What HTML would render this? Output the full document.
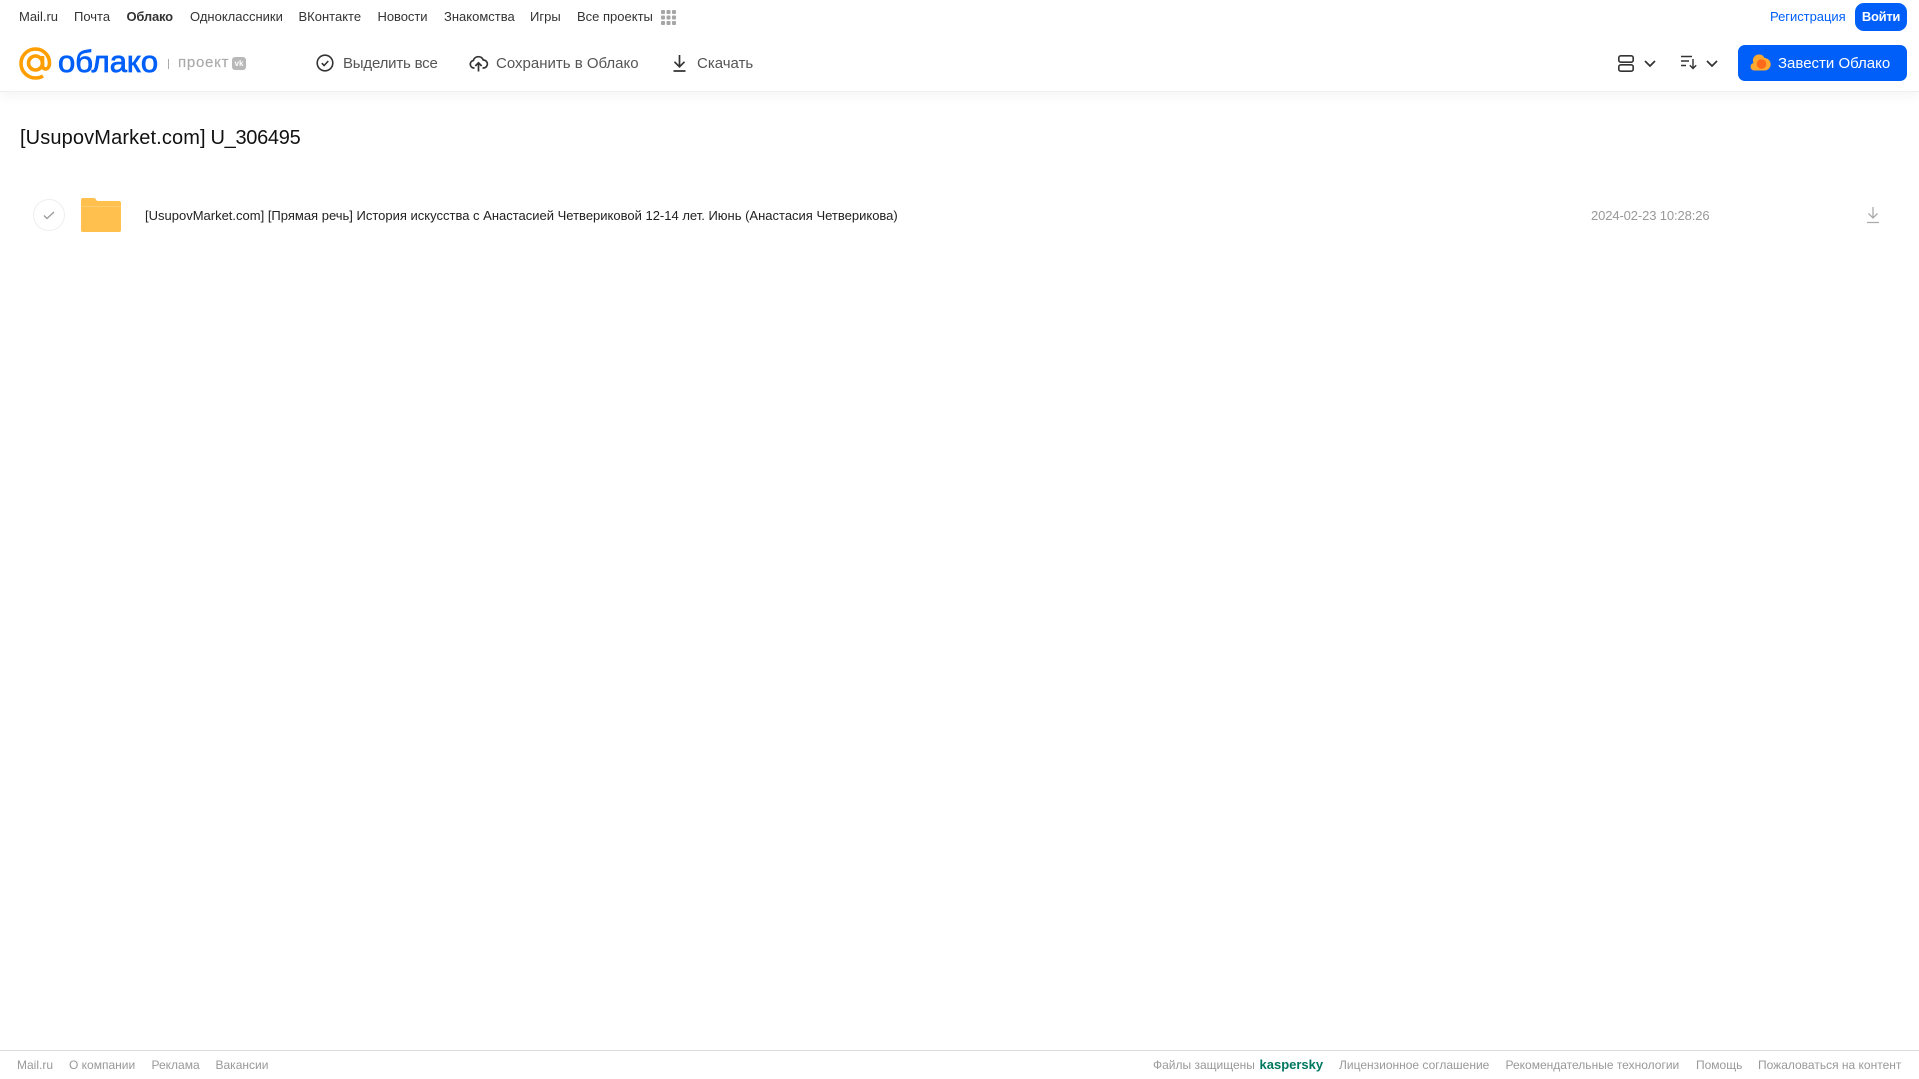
<!DOCTYPE html>
<html lang="ru"><head><meta charset="utf-8"><title>Облако</title>
<style>
html,body{margin:0;padding:0;width:1919px;height:1079px;overflow:hidden;background:#fff;font-family:"Liberation Sans",Arial,sans-serif}
.t{position:absolute;white-space:nowrap;line-height:18px}
.n{top:8px;font-size:13px;color:#333;transform-origin:0 50%}
.b{top:55px;font-size:15px;color:#555}
.f{top:1056px;font-size:12px;color:#999}
svg{position:absolute;overflow:visible}
</style></head><body>
<div style="position:absolute;left:0;top:0;width:1919px;height:91px;background:#fff;box-shadow:0 1px 0 #f0f0f0,0 4px 12px rgba(0,0,0,.05)"></div>

<span class="t n" style="left:19px">Mail.ru</span>
<span class="t n" style="left:74px">Почта</span>
<span class="t n" style="left:126.500px;font-weight:bold;letter-spacing:-.2px">Облако</span>
<span class="t n" style="left:190px">Одноклассники</span>
<span class="t n" style="left:298.500px">ВКонтакте</span>
<span class="t n" style="left:377.500px;letter-spacing:-.05px">Новости</span>
<span class="t n" style="left:444px">Знакомства</span>
<span class="t n" style="left:530px">Игры</span>
<span class="t n" style="left:577px">Все проекты</span>
<svg style="left:661px;top:10px" width="15" height="15" fill="#a6a6a6"><rect width="4" height="4" x="0" y="0" rx="1"/><rect width="4" height="4" x="5.500" y="0" rx="1"/><rect width="4" height="4" x="11" y="0" rx="1"/><rect width="4" height="4" x="0" y="5.500" rx="1"/><rect width="4" height="4" x="5.500" y="5.500" rx="1"/><rect width="4" height="4" x="11" y="5.500" rx="1"/><rect width="4" height="4" x="0" y="11" rx="1"/><rect width="4" height="4" x="5.500" y="11" rx="1"/><rect width="4" height="4" x="11" y="11" rx="1"/></svg>

<span class="t" style="left:1770px;top:8px;font-size:13px;color:#005ff9;letter-spacing:-.03px">Регистрация</span>
<div style="position:absolute;left:1855px;top:3px;width:52px;height:28px;border-radius:9px;background:#005ff9;color:#fff;font-size:13px;font-weight:bold;line-height:28px;text-align:center;letter-spacing:-.3px">Войти</div>

<!-- logo -->
<svg style="left:19px;top:47px" width="33" height="33" viewBox="0 0 33 33" fill="none" stroke="#ff9e00" stroke-width="3.600"><circle cx="16.500" cy="16" r="7"/><path d="M23.500 9v9.500c0 5 7 5 7-2.500C30.500 8 24 2 16.500 2 8.500 2 2 8.500 2 16.500S8.500 31 16.500 31c3 0 5.500-.8 7.500-2"/></svg>
<span class="t" style="left:58px;top:44px;font-size:31px;line-height:36px;color:#005ff9;-webkit-text-stroke:.8px #005ff9">облако</span>
<div style="position:absolute;left:168px;top:59px;width:1px;height:10px;background:#aaa"></div>
<span class="t" style="left:178px;top:54px;font-size:15px;color:#aaa;letter-spacing:.75px;-webkit-text-stroke:.15px #aaa">проект</span>
<div style="position:absolute;left:232px;top:57px;width:14px;height:13px;border-radius:3px;background:#b8b8b8;color:#fff;font-size:8px;font-weight:bold;line-height:13px;text-align:center">vk</div>

<!-- toolbar -->
<svg style="left:316px;top:54px" width="18" height="18" viewBox="0 0 18 18" fill="none" stroke="#333" stroke-width="1.600"><circle cx="9" cy="9" r="7.800"/><path d="M5.800 9.200l2.300 2.300 4.200-4.500"/></svg>
<span class="t b" style="left:343px;letter-spacing:-.2px">Выделить все</span>
<svg style="left:469px;top:54px" width="19" height="18" viewBox="0 0 19 18" fill="none" stroke="#333" stroke-width="1.700"><path d="M5.500 14H4.800A3.800 3.800 0 0 1 4.300 6.500 5.300 5.300 0 0 1 14.300 6 4 4 0 0 1 14.500 14H13.500"/><path d="M9.500 17.500V9M6.300 12l3.200-3.200L12.700 12"/></svg>
<span class="t b" style="left:496px">Сохранить в Облако</span>
<svg style="left:672px;top:54px" width="15" height="18" viewBox="0 0 15 18" fill="none" stroke="#333" stroke-width="1.700"><path d="M7.500 1v11.500M2.500 7.800l5 5 5-5M1.500 17h12"/></svg>
<span class="t b" style="left:697px">Скачать</span>

<svg style="left:1618px;top:55px" width="16" height="17" viewBox="0 0 16 17" fill="none" stroke="#333" stroke-width="1.600"><rect x=".8" y=".8" width="14.400" height="6.400" rx="2"/><rect x=".8" y="9.800" width="14.400" height="6.400" rx="2"/></svg>
<svg style="left:1644px;top:60px" width="12" height="7" fill="none" stroke="#333" stroke-width="1.700"><path d="M1 1l5 5 5-5"/></svg>
<svg style="left:1681px;top:55px" width="16" height="15" fill="none" stroke="#333" stroke-width="1.400"><path d="M0 1.500h11M0 6h8M0 10.500h5M12 4v9.500M8.800 10.300l3.200 3.200 3.200-3.200"/></svg>
<svg style="left:1706px;top:60px" width="12" height="7" fill="none" stroke="#333" stroke-width="1.700"><path d="M1 1l5 5 5-5"/></svg>

<div style="position:absolute;left:1738px;top:45px;width:169px;height:36px;border-radius:7px;background:#005ff9"></div>
<svg style="left:1750px;top:54px" width="20" height="17" viewBox="0 0 20 17"><path d="M4 16.500A3.800 3.800 0 0 1 3.500 9 6 6 0 0 1 9.500.5c2.500 0 4 1.500 5 3.500a6.300 6.300 0 0 1 1 12.500z" fill="#ffa930"/><circle cx="11.500" cy="10" r="4.800" fill="#ff6a1a"/></svg>
<span class="t" style="left:1778px;top:55px;font-size:15px;color:#fff">Завести Облако</span>

<!-- title -->
<span class="t" style="left:20px;top:125px;font-size:20px;line-height:26px;color:#111;letter-spacing:.13px">[UsupovMarket.com]</span>
<span class="t" style="left:210.500px;top:125px;font-size:20px;line-height:26px;color:#111;letter-spacing:-.3px">U_306495</span>

<!-- row -->
<div style="position:absolute;left:33px;top:199px;width:30px;height:30px;border:1px solid #eee;border-radius:50%"></div>
<svg style="left:43px;top:211px" width="12" height="9" fill="none" stroke="#999" stroke-width="1.300"><path d="M1 4.500l3 3 7-6.500"/></svg>
<svg style="left:81px;top:198px" width="40" height="34" viewBox="0 0 40 34"><path d="M2 0h10c2 0 3 1 4 3h22a2 2 0 0 1 2 2v27a2 2 0 0 1-2 2H2a2 2 0 0 1-2-2V2a2 2 0 0 1 2-2z" fill="#ffc04d"/><rect x="0" y="8" width="40" height="1" fill="#ffcd70"/></svg>
<span class="t" style="left:145px;top:207px;font-size:13px;color:#222">[UsupovMarket.com] [Прямая речь] История искусства с Анастасией Четвериковой 12-14 лет. Июнь (Анастасия Четверикова)</span>
<span class="t" style="left:1591px;top:207px;font-size:13px;color:#999;letter-spacing:-.12px">2024-02-23 10:28:26</span>
<svg style="left:1866px;top:206px" width="14" height="18" viewBox="0 0 14 18" fill="none" stroke="#aaa" stroke-width="1.300"><path d="M7 1v11M2.500 7.500L7 12l4.500-4.500M1 16.500h12"/></svg>

<!-- footer -->
<div style="position:absolute;left:0;top:1050px;width:1919px;height:1px;background:#ddd"></div>
<span class="t f" style="left:17px">Mail.ru</span>
<span class="t f" style="left:69px">О компании</span>
<span class="t f" style="left:151.500px">Реклама</span>
<span class="t f" style="left:215.500px">Вакансии</span>
<span class="t f" style="left:1153px">Файлы защищены</span>
<span class="t" style="left:1259.500px;top:1056px;font-size:13px;font-weight:bold;color:#00775f">kaspersky</span>
<span class="t f" style="left:1339px">Лицензионное соглашение</span>
<span class="t f" style="left:1505.500px">Рекомендательные технологии</span>
<span class="t f" style="left:1696px">Помощь</span>
<span class="t f" style="left:1758px">Пожаловаться на контент</span>
</body></html>
